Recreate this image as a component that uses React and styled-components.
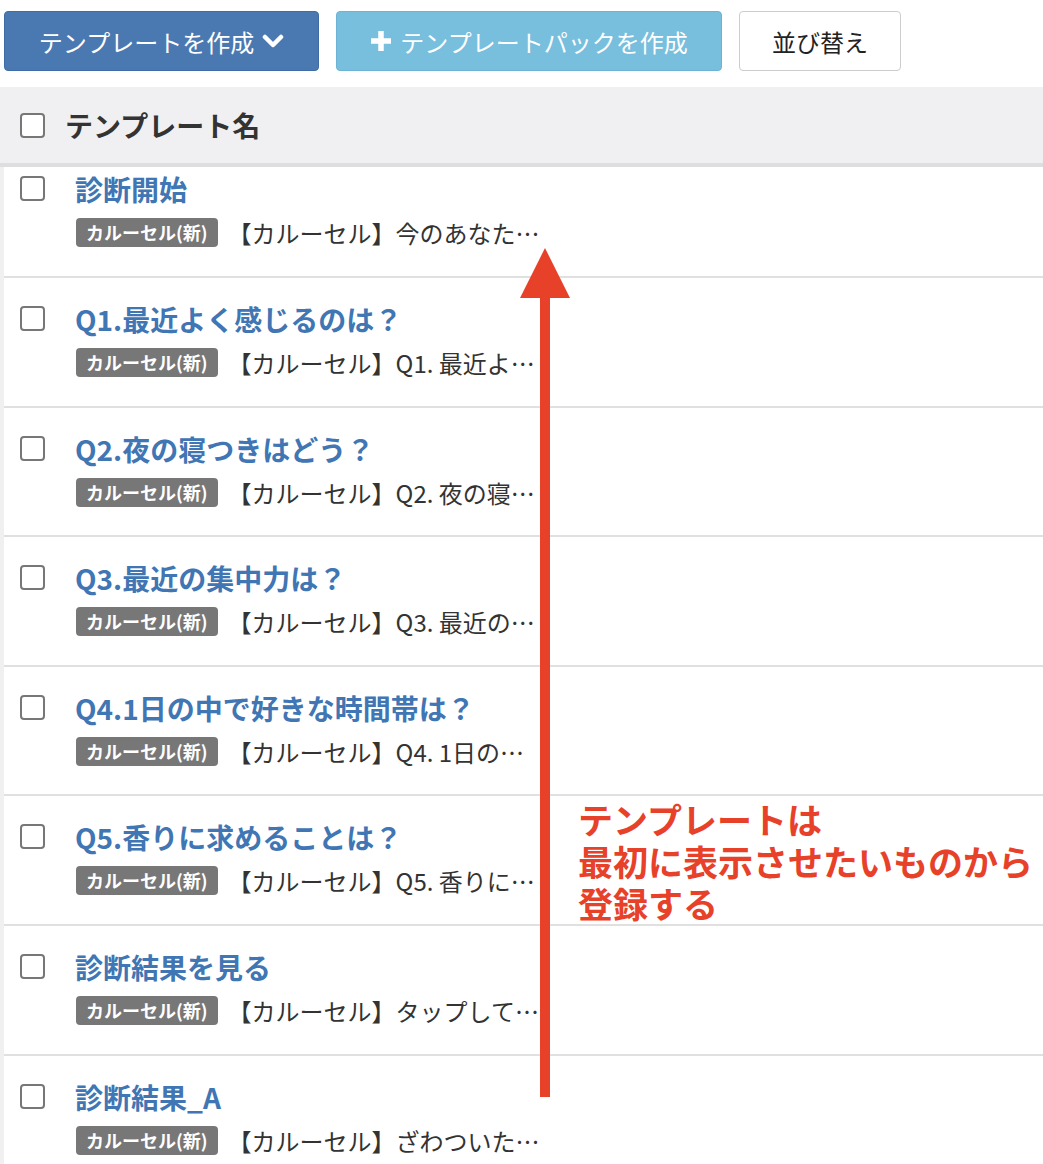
import React from 'react';
import styled, { createGlobalStyle } from 'styled-components';

const GlobalStyle = createGlobalStyle`
  body {
    margin: 0;
    background: #fff;
    font-family: "Noto Sans CJK JP", "Noto Sans", sans-serif;
    color: #333;
  }
  * { box-sizing: border-box; }
`;

const rows = [
  { title: '診断開始', desc: '【カルーセル】今のあなた…' },
  { title: 'Q1.最近よく感じるのは？', desc: '【カルーセル】Q1. 最近よ…' },
  { title: 'Q2.夜の寝つきはどう？', desc: '【カルーセル】Q2. 夜の寝…' },
  { title: 'Q3.最近の集中力は？', desc: '【カルーセル】Q3. 最近の…' },
  { title: 'Q4.1日の中で好きな時間帯は？', desc: '【カルーセル】Q4. 1日の…' },
  { title: 'Q5.香りに求めることは？', desc: '【カルーセル】Q5. 香りに…' },
  { title: '診断結果を見る', desc: '【カルーセル】タップして…' },
  { title: '診断結果_A', desc: '【カルーセル】ざわついた…' },
];

function App() {
  return (
    <React.Fragment>
      <GlobalStyle />
      <Page>
        <Toolbar>
          <Button variant="primary" width={315}>
            テンプレートを作成
            <svg width="22" height="16" viewBox="0 0 22 16">
              <path d="M3 4 L11 12 L19 4" fill="none" stroke="#fff" strokeWidth="4.5" strokeLinecap="round" strokeLinejoin="round" />
            </svg>
          </Button>
          <Button variant="info" width={386}>
            <svg width="22" height="22" viewBox="0 0 22 22">
              <path d="M11 1 V21 M1 11 H21" stroke="#fff" strokeWidth="5.5" />
            </svg>
            テンプレートパックを作成
          </Button>
          <Button variant="default" width={162}>並び替え</Button>
        </Toolbar>

        <Header>
          <Check />
          <HeaderTitle>テンプレート名</HeaderTitle>
        </Header>

        <List>
          {rows.map((r, i) => (
            <Row key={i} first={i === 0}>
              <Check />
              <Content>
                <Title>{r.title}</Title>
                <Meta>
                  <Badge>カルーセル(新)</Badge>
                  <Desc>{r.desc}</Desc>
                </Meta>
              </Content>
            </Row>
          ))}
        </List>

        <Arrow>
          <svg width="52" height="850" viewBox="0 0 52 850">
            <polygon points="26,0 51,50 1,50" fill="#e8412a" />
            <rect x="21" y="49" width="10" height="800" fill="#e8412a" />
          </svg>
        </Arrow>

        <Note>
          <NoteLine>テンプレートは</NoteLine>
          <NoteLine>最初に表示させたいものから</NoteLine>
          <NoteLine>登録する</NoteLine>
        </Note>
      </Page>
    </React.Fragment>
  );
}

const Page = styled.div`
  position: relative;
  width: 1043px;
  height: 1164px;
  overflow: hidden;
`;

const Toolbar = styled.div`
  display: flex;
  align-items: flex-start;
  gap: 17px;
  padding: 11px 0 0 4px;
  height: 87px;
`;

const Button = styled.button`
  display: flex;
  align-items: center;
  justify-content: center;
  gap: 8px;
  width: ${(p) => p.width}px;
  height: 60px;
  padding: 0;
  border-radius: 4px;
  font-family: "Noto Sans CJK JP", sans-serif;
  font-size: 24px;
  cursor: pointer;
  background: ${(p) =>
    p.variant === 'primary' ? '#4a79b2' : p.variant === 'info' ? '#78bedd' : '#fff'};
  border: 1px solid
    ${(p) => (p.variant === 'primary' ? '#3f6ca4' : p.variant === 'info' ? '#6cb3d5' : '#cccccc')};
  color: ${(p) => (p.variant === 'default' ? '#222' : '#fff')};
`;

const Header = styled.div`
  display: flex;
  align-items: center;
  gap: 20px;
  height: 80px;
  padding-left: 20px;
  background: #f0f0f2;
  border-bottom: 4px solid #dedede;
`;

const HeaderTitle = styled.div`
  font-size: 28px;
  font-weight: 700;
  color: #333;
`;

const Check = styled.span`
  display: block;
  flex: none;
  width: 25px;
  height: 25px;
  border: 2px solid #777;
  border-radius: 4px;
  background: #fff;
`;

const List = styled.div`
  border-left: 4px solid #f0f0f0;
`;

const Row = styled.div`
  display: flex;
  align-items: flex-start;
  gap: 30px;
  padding: ${(p) => (p.first ? '9px' : '28px')} 0 0 16px;
  height: ${(p) => (p.first ? '111px' : '129.6px')};
  border-bottom: 2px solid #e0e0e0;
`;

const Content = styled.div`
  display: flex;
  flex-direction: column;
  gap: 10px;
  margin-top: -6px;
`;

const Title = styled.div`
  font-size: 28px;
  font-weight: 700;
  line-height: 38px;
  color: #3f76b3;
`;

const Meta = styled.div`
  display: flex;
  align-items: center;
  gap: 10px;
  margin-left: 1px;
`;

const Badge = styled.span`
  display: inline-block;
  padding: 0 10px;
  height: 29px;
  line-height: 29px;
  border-radius: 4px;
  background: #777;
  color: #fff;
  font-size: 18px;
  font-weight: 700;
`;

const Desc = styled.span`
  font-size: 24px;
  line-height: 29px;
  color: #333;
`;

const Arrow = styled.div`
  position: absolute;
  left: 519px;
  top: 248px;
  line-height: 0;
`;

const Note = styled.div`
  position: absolute;
  left: 578px;
  top: 798px;
  display: flex;
  flex-direction: column;
  font-size: 35px;
  font-weight: 700;
  color: #e8412a;
`;

const NoteLine = styled.div`
  height: 42px;
  line-height: 42px;
`;

export default App;
